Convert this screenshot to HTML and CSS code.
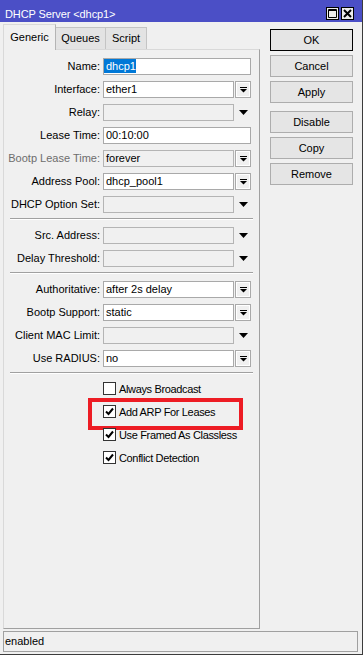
FILE: index.html
```html
<!DOCTYPE html>
<html lang="en">
<head>
<meta charset="UTF-8" />
<title>DHCP Server &lt;dhcp1&gt;</title>
<link rel="stylesheet" href="styles.css">
</head>
<body>

<div class="window">
  <div class="titlebar">
    <span class="title">DHCP Server &lt;dhcp1&gt;</span>
    <div class="winbtns">
      <span class="winbtn">
        <svg width="9" height="9" viewBox="0 0 9 9"><path d="M0.5 0.5h8v8h-8z M0.5 1.5h8" fill="none" stroke="#000" stroke-width="1"/></svg>
      </span>
      <span class="winbtn">
        <svg width="9" height="9" viewBox="0 0 9 9"><path d="M1 1L8 8M8 1L1 8" stroke="#000" stroke-width="2"/></svg>
      </span>
    </div>
  </div>

  <div class="main">
    <div class="left">
      <div class="tabs">
        <div class="tab active tab-generic">Generic</div>
        <div class="tab tab-queues">Queues</div>
        <div class="tab tab-script">Script</div>
      </div>

      <div class="panel">
        <div class="group">
          <div class="row">
            <span class="label">Name:</span>
            <div class="field full flush"><span class="sel">dhcp1</span></div>
          </div>
          <div class="row">
            <span class="label">Interface:</span>
            <div class="field">ether1</div>
            <span class="dd-btn"><svg width="7" height="6" viewBox="0 0 7 6"><rect width="7" height="1"/><path d="M0 2h7L3.5 5.5z"/></svg></span>
          </div>
          <div class="row">
            <span class="label">Relay:</span>
            <div class="field off"></div>
            <span class="dd-tri"><svg width="9" height="5" viewBox="0 0 9 5"><path d="M0 0h9L4.5 5z"/></svg></span>
          </div>
          <div class="row">
            <span class="label">Lease Time:</span>
            <div class="field full">00:10:00</div>
          </div>
          <div class="row">
            <span class="label muted">Bootp Lease Time:</span>
            <div class="field off">forever</div>
            <span class="dd-btn"><svg width="7" height="6" viewBox="0 0 7 6"><rect width="7" height="1"/><path d="M0 2h7L3.5 5.5z"/></svg></span>
          </div>
          <div class="row">
            <span class="label">Address Pool:</span>
            <div class="field">dhcp_pool1</div>
            <span class="dd-btn"><svg width="7" height="6" viewBox="0 0 7 6"><rect width="7" height="1"/><path d="M0 2h7L3.5 5.5z"/></svg></span>
          </div>
          <div class="row">
            <span class="label">DHCP Option Set:</span>
            <div class="field off"></div>
            <span class="dd-tri"><svg width="9" height="5" viewBox="0 0 9 5"><path d="M0 0h9L4.5 5z"/></svg></span>
          </div>
        </div>

        <div class="sep"></div>

        <div class="group">
          <div class="row">
            <span class="label">Src. Address:</span>
            <div class="field off"></div>
            <span class="dd-tri"><svg width="9" height="5" viewBox="0 0 9 5"><path d="M0 0h9L4.5 5z"/></svg></span>
          </div>
          <div class="row">
            <span class="label">Delay Threshold:</span>
            <div class="field off"></div>
            <span class="dd-tri"><svg width="9" height="5" viewBox="0 0 9 5"><path d="M0 0h9L4.5 5z"/></svg></span>
          </div>
        </div>

        <div class="sep"></div>

        <div class="group">
          <div class="row">
            <span class="label">Authoritative:</span>
            <div class="field">after 2s delay</div>
            <span class="dd-btn"><svg width="7" height="6" viewBox="0 0 7 6"><rect width="7" height="1"/><path d="M0 2h7L3.5 5.5z"/></svg></span>
          </div>
          <div class="row">
            <span class="label">Bootp Support:</span>
            <div class="field">static</div>
            <span class="dd-btn"><svg width="7" height="6" viewBox="0 0 7 6"><rect width="7" height="1"/><path d="M0 2h7L3.5 5.5z"/></svg></span>
          </div>
          <div class="row">
            <span class="label">Client MAC Limit:</span>
            <div class="field off"></div>
            <span class="dd-tri"><svg width="9" height="5" viewBox="0 0 9 5"><path d="M0 0h9L4.5 5z"/></svg></span>
          </div>
          <div class="row">
            <span class="label">Use RADIUS:</span>
            <div class="field">no</div>
            <span class="dd-btn"><svg width="7" height="6" viewBox="0 0 7 6"><rect width="7" height="1"/><path d="M0 2h7L3.5 5.5z"/></svg></span>
          </div>
        </div>

        <div class="sep sep-last"></div>

        <div class="group checks">
          <div class="check-row">
            <span class="box"></span>
            <span class="check-text">Always Broadcast</span>
          </div>
          <div class="check-row marked">
            <span class="box"><svg width="9" height="9" viewBox="0 0 9 9"><path d="M1 4.5L3.5 7L8 1.5" fill="none" stroke="#000" stroke-width="2"/></svg></span>
            <span class="check-text">Add ARP For Leases</span>
          </div>
          <div class="check-row">
            <span class="box"><svg width="9" height="9" viewBox="0 0 9 9"><path d="M1 4.5L3.5 7L8 1.5" fill="none" stroke="#000" stroke-width="2"/></svg></span>
            <span class="check-text">Use Framed As Classless</span>
          </div>
          <div class="check-row">
            <span class="box"><svg width="9" height="9" viewBox="0 0 9 9"><path d="M1 4.5L3.5 7L8 1.5" fill="none" stroke="#000" stroke-width="2"/></svg></span>
            <span class="check-text">Conflict Detection</span>
          </div>
        </div>
      </div>
    </div>

    <div class="actions">
      <button class="btn btn-default">OK</button>
      <button class="btn">Cancel</button>
      <button class="btn">Apply</button>
      <button class="btn btn-gap">Disable</button>
      <button class="btn">Copy</button>
      <button class="btn">Remove</button>
    </div>
  </div>

  <div class="status">enabled</div>
</div>

</body>
</html>
```

FILE: styles.css
```css
/* Base */
* {
  box-sizing: border-box;
}
body {
  margin: 0;
  font-family: "Liberation Sans", Arial, sans-serif;
  font-size: 11px;
  color: #000;
  background: #f0f0f0;
}

.window {
  width: 363px;
  height: 655px;
  display: flex;
  flex-direction: column;
  background: #f0f0f0;
  border-right: 1px solid #3c3c3c;
  border-bottom: 1px solid #3c3c3c;
}

/* Title bar */
.titlebar {
  height: 22px;
  flex-shrink: 0;
  background: #4b4fc6;
  color: #fff;
  display: flex;
  align-items: center;
  justify-content: space-between;
  padding: 5px 8px 0 5px;
}
.title {
  font-size: 11px;
  letter-spacing: -0.1px;
}
.winbtns {
  display: flex;
  gap: 2px;
}
.winbtn {
  width: 13px;
  height: 13px;
  background: #ececec;
  border: 1px solid #000;
  display: flex;
  align-items: center;
  justify-content: center;
}

/* Main area */
.main {
  flex: 1;
  display: flex;
  padding: 2px 0 0 3px;
  min-height: 0;
}
.left {
  width: 257px;
  display: flex;
  flex-direction: column;
}

/* Tabs */
.tabs {
  height: 25px;
  display: flex;
  align-items: flex-end;
}
.tab {
  height: 22px;
  line-height: 20px;
  text-align: center;
  background: #e3e3e3;
  border: 1px solid #c4c4c4;
  border-bottom: none;
  border-left: none;
}
.tab.active {
  height: 26px;
  line-height: 24px;
  margin-bottom: -1px;
  background: #f0f0f0;
  border-left: 1px solid #d9d9d9;
  border-top: 1px solid #d9d9d9;
  border-right: 1px solid #b4b4b4;
  position: relative;
  z-index: 1;
}
.tab-generic { width: 53px; }
.tab-queues { width: 50px; }
.tab-script { width: 41px; }

.panel {
  flex: 1;
  border: 1px solid #d9d9d9;
  border-right-color: #a0a0a0;
  border-bottom-color: #a0a0a0;
  padding-top: 8px;
}

/* Form rows */
.group {
  display: flex;
  flex-direction: column;
  gap: 6px;
}
.row {
  height: 17px;
  display: flex;
  align-items: center;
}
.label {
  width: 96px;
  margin-right: 3px;
  text-align: right;
  white-space: nowrap;
  line-height: 17px;
}
.label.muted {
  color: #6d6d6d;
}
.field {
  width: 131px;
  height: 17px;
  border: 1px solid #a9a9a9;
  background: #fff;
  padding: 0 2px;
  line-height: 15px;
  white-space: nowrap;
  overflow: hidden;
}
.field.full {
  width: 148px;
}
.field.flush {
  padding: 0;
}
.field.off {
  background: #f0f0f0;
  border-color: #b4b4b4;
}
.sel {
  display: inline-block;
  height: 14px;
  line-height: 14px;
  padding-left: 2px;
  background: #0078d7;
  color: #fff;
}
.dd-btn {
  width: 16px;
  height: 17px;
  margin-left: 1px;
  border: 1px solid #a9a9a9;
  background: #f0f0f0;
  box-shadow: inset 0 0 0 1px #fff;
  display: flex;
  align-items: center;
  justify-content: center;
}
.dd-tri {
  width: 16px;
  margin-left: 1px;
  display: flex;
  justify-content: center;
}

.sep {
  height: 2px;
  margin: 5px 6px 7px;
  border-top: 1px solid #a0a0a0;
  border-bottom: 1px solid #fff;
}
.sep-last {
  margin-bottom: 6px;
}

/* Checkboxes */
.checks {
  gap: 6px;
}
.check-row {
  height: 17px;
  display: flex;
  align-items: center;
  padding-left: 99px;
  position: relative;
}
.check-text {
  letter-spacing: -0.35px;
}
.box {
  width: 13px;
  height: 13px;
  border: 1px solid #333;
  background: #fff;
  margin-right: 3px;
  display: flex;
  align-items: center;
  justify-content: center;
}
.check-row.marked::after {
  content: "";
  position: absolute;
  left: 84px;
  top: -5px;
  width: 147px;
  height: 24px;
  border: 4px solid #ed1c24;
}

/* Buttons */
.actions {
  width: 83px;
  margin-left: 10px;
  padding-top: 5px;
  display: flex;
  flex-direction: column;
  gap: 4px;
}
.btn {
  height: 22px;
  padding: 0;
  font-family: inherit;
  font-size: 11px;
  color: #000;
  background: #e5e5e5;
  border: 1px solid #adadad;
  border-radius: 0;
}
.btn-default {
  border: 1px solid #000;
}
.btn-gap {
  margin-top: 4px;
}

/* Status bar */
.status {
  height: 21px;
  flex-shrink: 0;
  margin: 2px 4px 2px 3px;
  border: 1px solid #a0a0a0;
  padding-left: 1px;
  line-height: 19px;
}
```
